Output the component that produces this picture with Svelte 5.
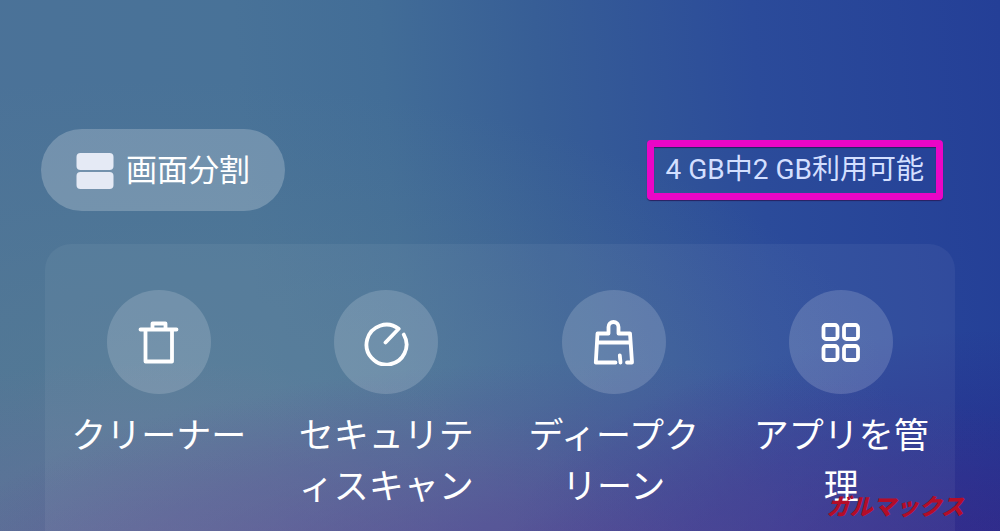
<script lang="ts">
  type Icon = 'trash' | 'scan' | 'brush' | 'apps';

  interface Tool {
    icon: Icon;
    label: string;
  }

  const tools: Tool[] = [
    { icon: 'trash', label: 'クリーナー' },
    { icon: 'scan', label: 'セキュリティスキャン' },
    { icon: 'brush', label: 'ディープクリーン' },
    { icon: 'apps', label: 'アプリを管理' },
  ];
</script>

<main class="screen" lang="ja">
  <header class="top">
    <button type="button" class="split">
      <svg class="split-icon" viewBox="0 0 38 38" aria-hidden="true">
        <rect x="0.5" y="1" width="37" height="17" rx="4" />
        <rect x="0.5" y="20" width="37" height="17" rx="4" />
      </svg>
      <span>画面分割</span>
    </button>
    <p class="memory">4 GB中2 GB利用可能</p>
  </header>

  <section class="panel">
    {#each tools as tool (tool.icon)}
      <button type="button" class="tool">
        <span class="disc">
          <svg class="icon" viewBox="0 0 48 48" aria-hidden="true">
            {#if tool.icon === 'trash'}
              <path d="M5.5 11.5H41.5M10.5 11.5V43.5H37V11.5M17.5 11V5.5H30.5V11" />
            {:else if tool.icon === 'scan'}
              <path d="M23.5 24.5L36.7 10.8A20 20 0 1 0 41.8 16.6" />
            {:else if tool.icon === 'brush'}
              <path d="M25.5 44.5H5.8L7.5 15.5H18.5V9a5 5 0 0 1 10 0V15.5H40L42 44.5H37M7.5 24.5H40.5M29.8 37.5L30.5 44.5" />
            {:else}
              <rect x="6.5" y="7" width="14" height="14" rx="2.5" />
              <rect x="27" y="7" width="14" height="14" rx="2.5" />
              <rect x="6.5" y="28" width="14" height="14" rx="2.5" />
              <rect x="27" y="28" width="14" height="14" rx="2.5" />
            {/if}
          </svg>
        </span>
        <span class="label">{tool.label}</span>
      </button>
    {/each}
  </section>

  <span class="watermark">ガルマックス</span>
</main>

<style>
  :global(body) {
    margin: 0;
    background: #2b3f92;
  }
  .screen {
    position: relative;
    box-sizing: border-box;
    min-height: 100vh;
    display: flex;
    flex-direction: column;
    gap: 33px;
    padding: 129px 45px 0;
    overflow: hidden;
    color: #fff;
    font-family: Roboto, 'Noto Sans CJK JP', sans-serif;
    background:
      radial-gradient(ellipse 65% 42% at 58% 110%, rgba(80, 50, 142, 0.7), rgba(80, 50, 142, 0) 100%),
      radial-gradient(ellipse 50% 46% at 100% 108%, rgba(40, 26, 130, 0.7), rgba(40, 26, 130, 0) 100%),
      radial-gradient(ellipse 55% 44% at 16% 112%, rgba(112, 108, 154, 0.7), rgba(112, 108, 154, 0) 100%),
      radial-gradient(ellipse 75% 60% at 14% 75%, rgba(92, 128, 146, 0.5), rgba(92, 128, 146, 0) 100%),
      linear-gradient(86deg, #4b7298 0%, #487298 26%, #426d97 40%, #375e96 55%, #2b4b9a 76%, #243f97 100%);
  }
  button {
    border: 0;
    color: inherit;
    font-family: inherit;
    cursor: pointer;
  }
  .top {
    display: flex;
    align-items: center;
    justify-content: space-between;
  }
  .split {
    display: flex;
    align-items: center;
    gap: 12px;
    height: 82px;
    /* The pill hangs slightly outside the panel's edge. */
    margin-left: -4px;
    padding: 2px 35px 0;
    border-radius: 41px;
    background: rgba(255, 255, 255, 0.22);
    font-size: 31px;
    line-height: 40px;
  }
  .split-icon {
    width: 38px;
    height: 38px;
    fill: #e5eaf5;
  }
  .memory {
    margin: 0 12px 0 0;
    padding: 0 12px;
    border: 7px solid #ea06c6;
    border-radius: 4px;
    box-shadow:
      0 1px 1px #2a2060,
      inset 0 1px 1px #2a2060;
    color: #d3dfff;
    font-size: 28px;
    line-height: 46px;
    white-space: nowrap;
  }
  .panel {
    flex: 1;
    display: grid;
    grid-template-columns: repeat(4, 1fr);
    align-items: start;
    padding: 46px 0 16px;
    border-radius: 26px 26px 0 0;
    background: rgba(255, 255, 255, 0.05);
  }
  .tool {
    display: flex;
    flex-direction: column;
    align-items: center;
    gap: 17px;
    padding: 0 24px;
    background: transparent;
  }
  .disc {
    display: grid;
    place-items: center;
    width: 104px;
    height: 104px;
    border-radius: 50%;
    background: rgba(255, 255, 255, 0.16);
  }
  .icon {
    width: 48px;
    height: 48px;
    fill: none;
    stroke: #fff;
    stroke-width: 3.8;
    stroke-linecap: round;
    stroke-linejoin: round;
  }
  .label {
    font-size: 35px;
    line-height: 51px;
    text-align: center;
    /* Small kana may start a line here. */
    line-break: anywhere;
  }
  .watermark {
    position: absolute;
    right: 36px;
    bottom: 9px;
    color: #b40d28;
    font-size: 23px;
    font-style: italic;
    font-weight: 900;
    line-height: 28px;
  }
</style>
